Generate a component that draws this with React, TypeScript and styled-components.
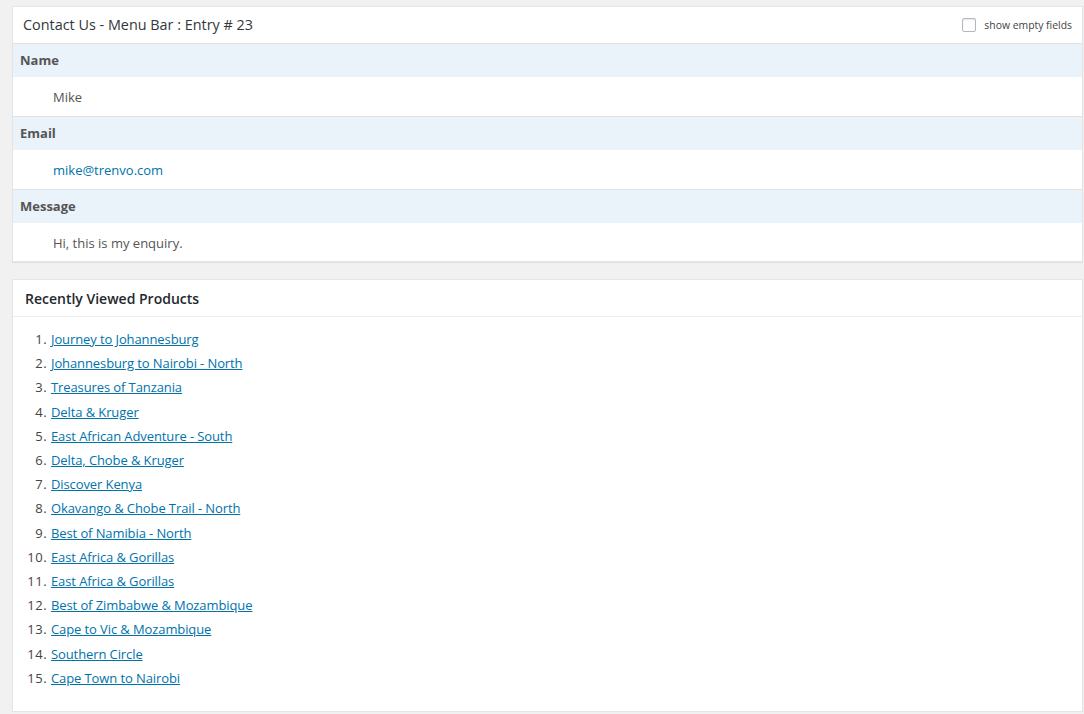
import styled, { createGlobalStyle } from 'styled-components';

const GlobalStyle = createGlobalStyle`
  html, body {
    margin: 0;
    padding: 0;
    background: #f1f1f1;
    font-family: "Open Sans", "Liberation Sans", sans-serif;
    color: #444;
    font-size: 13px;
  }
`;

const Page = styled.div`
  padding: 6px 1px 0 12px;
  display: flex;
  flex-direction: column;
  gap: 17px;
`;

const Card = styled.div`
  background: #fff;
  border: 1px solid #e5e5e5;
  box-shadow: 0 1px 1px rgba(0, 0, 0, 0.06);
`;

const EntryHeader = styled.div`
  display: flex;
  align-items: center;
  justify-content: space-between;
  height: 36px;
  padding: 0 10px 0 10px;
  border-bottom: 1px solid #e1e1e1;
`;

const EntryTitle = styled.span`
  font-size: 14.4px;
  color: #32373c;
  line-height: 20px;
`;

const ShowEmpty = styled.label`
  display: flex;
  align-items: center;
  gap: 8px;
  font-size: 10.4px;
  color: #444;
`;

const Check = styled.span`
  width: 12px;
  height: 12px;
  border: 1px solid #b4b9be;
  border-radius: 2px;
  background: #fff;
  box-shadow: inset 0 1px 2px rgba(0, 0, 0, 0.1);
`;

const FieldName = styled.div`
  background: #eaf2fa;
  font-weight: 700;
  color: #555;
  font-size: 13px;
  line-height: 19px;
  padding: 7px 7px;
`;

const FieldValue = styled.div<{ $last?: boolean }>`
  padding: 11px 7px ${(p) => (p.$last ? '8px' : '9px')} 40px;
  line-height: 19px;
  color: #555;
  border-bottom: ${(p) => (p.$last ? 'none' : '1px solid #e1e1e1')};
`;

const Link = styled.a`
  color: #0073aa;
  text-decoration: underline;
  letter-spacing: -0.1px;
`;

const EmailLink = styled.a`
  color: #0073aa;
  text-decoration: none;
`;

const BoxHeader = styled.div`
  height: 36px;
  display: flex;
  align-items: center;
  padding: 0 12px;
  font-size: 14px;
  font-weight: 600;
  color: #23282d;
  border-bottom: 1px solid #eee;
`;

const BoxBody = styled.div`
  padding: 10px 12px 21px;
`;

const List = styled.ol`
  margin: 0;
  padding-left: 26px;
  color: #444;
  font-size: 13px;

  li {
    line-height: 24.2px;
  }

  li::marker {
    letter-spacing: 0.5px;
  }
`;

const fields = [
  { name: 'Name', value: 'Mike' },
  { name: 'Email', value: 'mike@trenvo.com', email: true },
  { name: 'Message', value: 'Hi, this is my enquiry.' },
];

const products = [
  'Journey to Johannesburg',
  'Johannesburg to Nairobi - North',
  'Treasures of Tanzania',
  'Delta & Kruger',
  'East African Adventure - South',
  'Delta, Chobe & Kruger',
  'Discover Kenya',
  'Okavango & Chobe Trail - North',
  'Best of Namibia - North',
  'East Africa & Gorillas',
  'East Africa & Gorillas',
  'Best of Zimbabwe & Mozambique',
  'Cape to Vic & Mozambique',
  'Southern Circle',
  'Cape Town to Nairobi',
];

export default function App() {
  return (
    <>
      <GlobalStyle />
      <Page>
        <Card>
          <EntryHeader>
            <EntryTitle>Contact Us - Menu Bar : Entry # 23</EntryTitle>
            <ShowEmpty>
              <Check />
              show empty fields
            </ShowEmpty>
          </EntryHeader>
          {fields.map((f, i) => (
            <div key={f.name}>
              <FieldName>{f.name}</FieldName>
              <FieldValue $last={i === fields.length - 1}>
                {f.email ? <EmailLink href="#">{f.value}</EmailLink> : f.value}
              </FieldValue>
            </div>
          ))}
        </Card>
        <Card>
          <BoxHeader>Recently Viewed Products</BoxHeader>
          <BoxBody>
            <List>
              {products.map((p, i) => (
                <li key={i}>
                  <Link href="#">{p}</Link>
                </li>
              ))}
            </List>
          </BoxBody>
        </Card>
      </Page>
    </>
  );
}
